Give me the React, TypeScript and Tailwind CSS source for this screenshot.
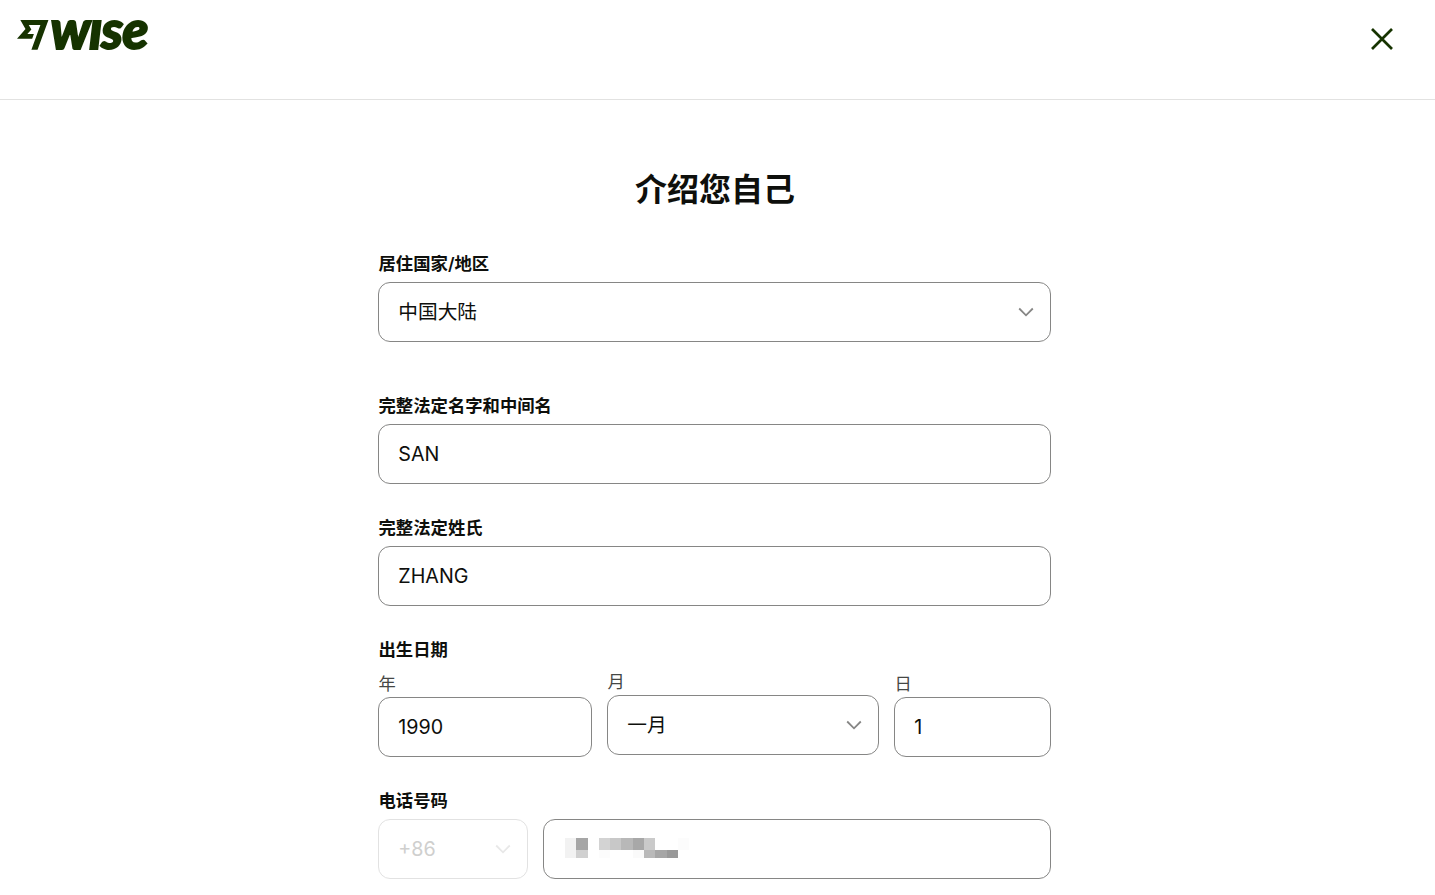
import React from 'react';

interface FieldProps {
    label: string;
    className?: string;
    children: React.ReactNode;
}

interface InputBoxProps {
    value: string;
    label: string;
    className?: string;
}

interface SelectBoxProps extends InputBoxProps {
    disabled?: boolean;
}

const WiseLogo = () => (
    <svg width="140" height="34" viewBox="0 0 140 34" className="overflow-visible" fill="#163300" role="img" aria-label="Wise">
        <path
            transform="translate(1 1.2) scale(1.31 1.3)"
            d="M6.488 7.469 0 15.05h11.585l1.301-3.576H7.922l3.033-3.507.01-.092L8.993 4.48h8.873l-6.878 18.925h4.706L24 .595H2.543l3.945 6.874Z"
        />
        <text
            x="34.5"
            y="31"
            dx="0 -1.5 -1 -1"
            textLength="98"
            lengthAdjust="spacingAndGlyphs"
            stroke="#163300"
            strokeWidth="1.8"
            className="font-['Lato'] text-[54px] font-black italic"
        >
            wıse
        </text>
    </svg>
);

const CloseIcon = () => (
    <svg width="24" height="24" viewBox="0 0 24 24" fill="none" stroke="#163300" strokeWidth="2.7">
        <path d="M2 2 22 22M22 2 2 22" />
    </svg>
);

const ChevronIcon = () => (
    <svg width="16" height="10" viewBox="0 0 16 10" fill="none" stroke="currentColor" strokeWidth="1.8">
        <path d="m1.2 1.5 6.8 6.8 6.8-6.8" />
    </svg>
);

const Field: React.FC<FieldProps> = ({ label, className = '', children }) => (
    <div className={className}>
        <div className="h-[37px] pl-[0.5px] text-[17.35px] leading-[37px] font-semibold text-[#0e0f0c]">{label}</div>
        {children}
    </div>
);

const InputBox: React.FC<InputBoxProps> = ({ value, label, className = '' }) => (
    <input
        type="text"
        defaultValue={value}
        aria-label={label}
        className={`block h-[60px] w-full rounded-xl border border-[#868685] bg-white pr-5 pl-[19.3px] text-[19.7px] text-[#0e0f0c] outline-none ${className}`}
    />
);

const SelectBox: React.FC<SelectBoxProps> = ({ value, label, disabled = false, className = '' }) => (
    <button
        type="button"
        disabled={disabled}
        aria-label={label}
        className={`flex h-[60px] w-full items-center justify-between rounded-xl border bg-white pr-4 pl-[19.3px] text-[19.7px] ${disabled ? 'border-[#e2e2e2] text-[#cfcfce]' : 'border-[#868685] text-[#0e0f0c]'} ${className}`}
    >
        <span className="pt-0.5">{value}</span>
        <span className={disabled ? 'text-[#e8e8e8]' : 'text-[#868685]'}>
            <ChevronIcon />
        </span>
    </button>
);

// Shades of the pixelated phone number, left to right
const maskRows = [
    ['#f2f2f2', '#a6a6a6', '#fff', '#d3d3d3', '#c8c8c8', '#b8b8b8', '#a8a8a8', '#cacaca', '#fff', '#fff', '#fcfcfc'],
    ['#f2f2f2', '#d0d0d0', '#fff', '#fcfcfc', '#fff', '#fff', '#fafafa', '#b9b9b9', '#a6a6a6', '#999999', '#fff'],
];

const MaskedNumber = () => (
    <div>
        {maskRows.map((row, i) => (
            <div key={i} className={i === 0 ? 'flex h-3' : 'flex h-2'}>
                {row.map((color, j) => (
                    <div key={j} className="w-[11.3px]" style={{ backgroundColor: color }} />
                ))}
            </div>
        ))}
    </div>
);

const App = () => {
    const subLabel = 'h-6 pl-[0.5px] text-[17.3px] leading-[22px] text-[#454745]';

    return (
        <div className="h-[895px] overflow-hidden bg-white font-['Inter','Noto_Sans_CJK_SC',sans-serif]">
            <header className="flex h-[100px] items-start justify-between border-b border-[#e2e2e1] pt-[18px] pr-[41px] pl-4">
                <WiseLogo />
                <button type="button" aria-label="关闭" className="mt-[9px]">
                    <CloseIcon />
                </button>
            </header>

            <main className="ml-[378px] w-[673px]">
                <h1 className="pt-[66px] pl-px text-center text-[32px] leading-[48px] font-semibold text-[#0e0f0c]">介绍您自己</h1>

                <form className="pt-[31px]">
                    <Field label="居住国家/地区">
                        <SelectBox value="中国大陆" label="居住国家/地区" />
                    </Field>
                    <Field label="完整法定名字和中间名" className="mt-[45px]">
                        <InputBox value="SAN" label="完整法定名字和中间名" />
                    </Field>
                    <Field label="完整法定姓氏" className="mt-[25px]">
                        <InputBox value="ZHANG" label="完整法定姓氏" />
                    </Field>
                    <Field label="出生日期" className="mt-[25px]">
                        <div className="flex gap-[15px]">
                            <div className="w-[214px] pt-[5px]">
                                <div className={subLabel}>年</div>
                                <InputBox value="1990" label="年" />
                            </div>
                            <div className="w-[272px] pt-[3px]">
                                <div className={subLabel}>月</div>
                                <SelectBox value="一月" label="月" />
                            </div>
                            <div className="w-[157px] pt-[5px]">
                                <div className={subLabel}>日</div>
                                <InputBox value="1" label="日" />
                            </div>
                        </div>
                    </Field>
                    <Field label="电话号码" className="mt-[25px]">
                        <div className="flex gap-[15px]">
                            <div className="w-[150px]">
                                <SelectBox value="+86" label="国家代码" disabled />
                            </div>
                            <div className="flex h-[60px] w-[508px] items-start rounded-xl border border-[#868685] pt-[18px] pl-[21px]">
                                <MaskedNumber />
                            </div>
                        </div>
                    </Field>
                </form>
            </main>
        </div>
    );
};

export default App;
